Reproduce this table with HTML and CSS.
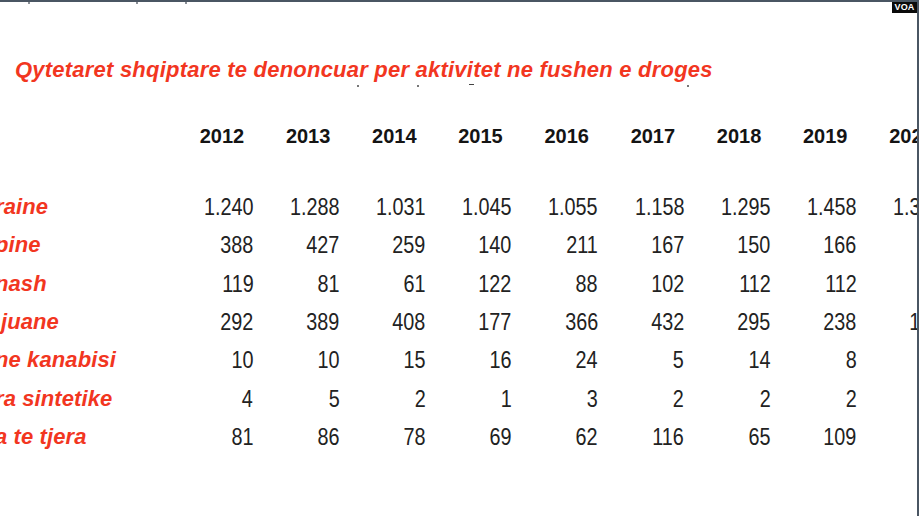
FILE: index.html
```html
<!DOCTYPE html>
<html lang="sq">
<head>
<meta charset="utf-8">
<title>Qytetaret shqiptare te denoncuar</title>
<link rel="stylesheet" href="styles.css">
</head>
<body>
<div class="frame">
  <span class="voa">VOA</span>
  <div class="specks">
    <i class="speck s1"></i><i class="speck s2"></i><i class="speck s3"></i>
    <i class="speck s4"></i><i class="speck s5"></i><i class="speck s6"></i><i class="speck s7"></i>
  </div>
  <h1 class="title">Qytetaret shqiptare te denoncuar per aktivitet ne fushen e droges</h1>
  <div class="table">
    <div class="row head">
      <span class="label"></span>
      <span class="year">2012</span><span class="year">2013</span><span class="year">2014</span>
      <span class="year">2015</span><span class="year">2016</span><span class="year">2017</span>
      <span class="year">2018</span><span class="year">2019</span><span class="year">2020</span>
    </div>
    <div class="row">
      <span class="label">raine</span>
      <span class="cell"><span class="num">1.240</span></span><span class="cell"><span class="num">1.288</span></span><span class="cell"><span class="num">1.031</span></span>
      <span class="cell"><span class="num">1.045</span></span><span class="cell"><span class="num">1.055</span></span><span class="cell"><span class="num">1.158</span></span>
      <span class="cell"><span class="num">1.295</span></span><span class="cell"><span class="num">1.458</span></span><span class="cell"><span class="num">1.346</span></span>
    </div>
    <div class="row">
      <span class="label">pine</span>
      <span class="cell"><span class="num">388</span></span><span class="cell"><span class="num">427</span></span><span class="cell"><span class="num">259</span></span>
      <span class="cell"><span class="num">140</span></span><span class="cell"><span class="num">211</span></span><span class="cell"><span class="num">167</span></span>
      <span class="cell"><span class="num">150</span></span><span class="cell"><span class="num">166</span></span><span class="cell"><span class="num">98</span></span>
    </div>
    <div class="row">
      <span class="label">nash</span>
      <span class="cell"><span class="num">119</span></span><span class="cell"><span class="num">81</span></span><span class="cell"><span class="num">61</span></span>
      <span class="cell"><span class="num">122</span></span><span class="cell"><span class="num">88</span></span><span class="cell"><span class="num">102</span></span>
      <span class="cell"><span class="num">112</span></span><span class="cell"><span class="num">112</span></span><span class="cell"><span class="num">87</span></span>
    </div>
    <div class="row">
      <span class="label label-near">juane</span>
      <span class="cell"><span class="num">292</span></span><span class="cell"><span class="num">389</span></span><span class="cell"><span class="num">408</span></span>
      <span class="cell"><span class="num">177</span></span><span class="cell"><span class="num">366</span></span><span class="cell"><span class="num">432</span></span>
      <span class="cell"><span class="num">295</span></span><span class="cell"><span class="num">238</span></span><span class="cell"><span class="num">175</span></span>
    </div>
    <div class="row">
      <span class="label">ne kanabisi</span>
      <span class="cell"><span class="num">10</span></span><span class="cell"><span class="num">10</span></span><span class="cell"><span class="num">15</span></span>
      <span class="cell"><span class="num">16</span></span><span class="cell"><span class="num">24</span></span><span class="cell"><span class="num">5</span></span>
      <span class="cell"><span class="num">14</span></span><span class="cell"><span class="num">8</span></span><span class="cell"><span class="num">9</span></span>
    </div>
    <div class="row">
      <span class="label">ra sintetike</span>
      <span class="cell"><span class="num">4</span></span><span class="cell"><span class="num">5</span></span><span class="cell"><span class="num">2</span></span>
      <span class="cell"><span class="num">1</span></span><span class="cell"><span class="num">3</span></span><span class="cell"><span class="num">2</span></span>
      <span class="cell"><span class="num">2</span></span><span class="cell"><span class="num">2</span></span><span class="cell"><span class="num">3</span></span>
    </div>
    <div class="row">
      <span class="label">a te tjera</span>
      <span class="cell"><span class="num">81</span></span><span class="cell"><span class="num">86</span></span><span class="cell"><span class="num">78</span></span>
      <span class="cell"><span class="num">69</span></span><span class="cell"><span class="num">62</span></span><span class="cell"><span class="num">116</span></span>
      <span class="cell"><span class="num">65</span></span><span class="cell"><span class="num">109</span></span><span class="cell"><span class="num">71</span></span>
    </div>
  </div>
</div>
</body>
</html>
```

FILE: styles.css
```css
html, body {
  margin: 0;
  padding: 0;
  background: #ffffff;
}

.frame {
  position: relative;
  box-sizing: border-box;
  width: 919px;
  height: 516px;
  overflow: hidden;
  background: #ffffff;
  border-top: 2px solid #4a5663;
  border-right: 2px solid #4a5663;
  font-family: "Liberation Sans", Arial, sans-serif;
}

.voa {
  position: absolute;
  top: -2px;
  right: 0;
  width: 25px;
  height: 13px;
  background: #0a0a0a;
  color: #ffffff;
  font: bold 9px/14px "Liberation Sans", Arial, sans-serif;
  text-align: center;
  letter-spacing: 0.2px;
}

.specks .speck {
  position: absolute;
  display: block;
  width: 2px;
  height: 2px;
  background: #8a8f96;
}
.specks .s1 { left: 28px; top: 0; }
.specks .s2 { left: 136px; top: 0; }
.specks .s3 { left: 185px; top: 0; }
.specks .s4 { left: 357px; top: 83px; background: #777; }
.specks .s5 { left: 417px; top: 83px; background: #777; }
.specks .s6 { left: 469px; top: 82px; width: 5px; height: 1px; background: #444; }
.specks .s7 { left: 687px; top: 83px; background: #777; }

.title {
  margin: 0;
  padding: 56px 0 0 15px;
  font-family: "Liberation Sans", Arial, sans-serif;
  font-size: 22px;
  line-height: 24px;
  letter-spacing: 0.22px;
  font-weight: bold;
  font-style: italic;
  color: #f2361f;
  white-space: nowrap;
}

.table {
  margin-top: 42px;
}

.row {
  display: grid;
  grid-template-columns: 167px repeat(9, 86.2px);
  white-space: nowrap;
}

.head {
  height: 24px;
  line-height: 24px;
  margin-bottom: 40px;
}

.row:not(.head) {
  height: 38.33px;
  line-height: 38.33px;
}

.label {
  margin-left: -5px;
  font-size: 22px;
  letter-spacing: 0.1px;
  font-weight: bold;
  font-style: italic;
  color: #f2361f;
}

.label-near {
  margin-left: 1px;
}

.year {
  text-align: right;
  padding-right: 9px;
  font-size: 20px;
  font-weight: bold;
  color: #141414;
}

.cell {
  text-align: right;
}

.num {
  display: inline-block;
  font-family: "Liberation Sans", Arial, sans-serif;
  font-size: 23px;
  color: #222222;
  transform: scaleX(0.86);
  transform-origin: right center;
}
```
